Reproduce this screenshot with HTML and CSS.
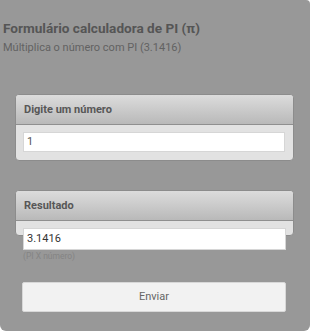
FILE: index.html
```html
<!DOCTYPE html>
<html>
<head>
<meta charset="utf-8">
<link rel="stylesheet" href="styles.css">
</head>
<body>
<div class="wrap">
  <h1 class="title">Formulário calculadora de PI (π)</h1>
  <p class="subtitle">Múltiplica o número com PI (3.1416)</p>

  <div class="panel panel-first">
    <div class="panel-head">Digite um número</div>
    <div class="panel-body">
      <div class="field">1</div>
    </div>
  </div>

  <div class="panel panel-second">
    <div class="panel-head">Resultado</div>
    <div class="panel-body panel-body-short"></div>
  </div>
  <div class="result">
    <div class="field field-result">3.1416</div>
    <div class="hint">(PI X número)</div>
  </div>

  <div class="btn">Enviar</div>
</div>
</body>
</html>
```
FILE: styles.css
```css
html, body {
  margin: 0;
  padding: 0;
  background: #fff;
}
body {
  font-family: Roboto, "Liberation Sans", sans-serif;
}
.wrap {
  width: 310px;
  height: 331px;
  box-sizing: border-box;
  background: #989898;
  border-radius: 0 4px 6px 6px;
  padding-top: 19px;
  overflow: hidden;
}
.title {
  margin: 0;
  padding-left: 3px;
  font-size: 13.6px;
  line-height: 18px;
  font-weight: 700;
  color: #555;
}
.subtitle {
  margin: 4px 0 0;
  padding-left: 3px;
  font-size: 11px;
  line-height: 14px;
  color: #626262;
}
.panel {
  margin-left: 15px;
  width: 279px;
  box-sizing: border-box;
  border: 1px solid #8c8c8c;
  border-radius: 4px;
  background: #e2e2e2;
  overflow: hidden;
}
.panel-first {
  margin-top: 39px;
}
.panel-second {
  margin-top: 29px;
}
.panel-head {
  height: 30px;
  box-sizing: border-box;
  border-bottom: 1px solid #8f8f8f;
  background: linear-gradient(#dcdcdc, #b9b9b9);
  padding-left: 8px;
  font-size: 11px;
  font-weight: 700;
  line-height: 30px;
  color: #575757;
}
.panel-body {
  padding: 7px 8px 8px 7px;
}
.panel-body-short {
  height: 14px;
  padding: 0;
  box-sizing: border-box;
}
.field {
  height: 20px;
  box-sizing: border-box;
  background: #fff;
  border: 1px solid #d6d6d6;
  padding-left: 3px;
  font-size: 11px;
  line-height: 18px;
  color: #555;
}
.result {
  position: relative;
  margin: -8px 0 0 23px;
  width: 263px;
}
.field-result {
  height: 22px;
  line-height: 20px;
  color: #333;
}
.hint {
  margin-top: 1px;
  font-size: 8.5px;
  line-height: 10px;
  color: #848484;
}
.btn {
  margin: 21px 0 0 22px;
  width: 264px;
  height: 30px;
  box-sizing: border-box;
  background: #f2f2f2;
  border: 1px solid #d8d8d8;
  border-radius: 2px;
  text-align: center;
  font-size: 11px;
  line-height: 28px;
  color: #666;
}
```
